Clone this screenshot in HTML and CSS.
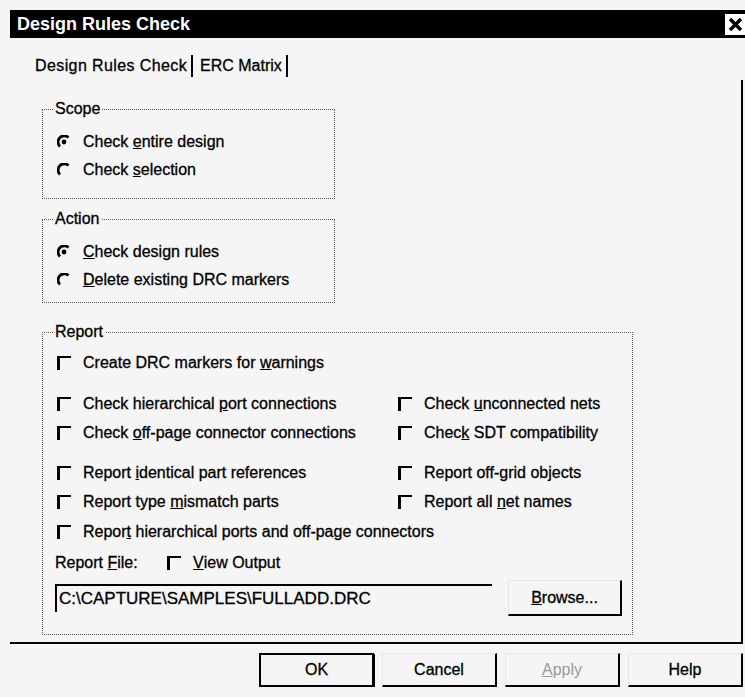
FILE: index.html
```html
<!DOCTYPE html>
<html>
	<head>
		<meta charset="utf-8"/>
		<title>Design Rules Check</title>
		<link rel="stylesheet" href="styles.css">
	</head>
	<body>
		<div class="dialog">
			<div class="titlebar">
				<span class="title">Design Rules Check</span>
				<span class="close">
					<svg width="15" height="15" viewBox="0 0 15 15"><path d="M2 2 L13 13 M13 2 L2 13" stroke="#000" stroke-width="3.4" fill="none"/></svg>
				</span>
			</div>

			<div class="tabs">
				<div class="tab tab_active">Design Rules Check</div>
				<div class="tab tab_erc">ERC Matrix</div>
			</div>

			<div class="panel">
				<fieldset class="group scope">
					<legend>Scope</legend>
					<div class="option">
						<svg class="radio" width="14" height="14" viewBox="0 0 14 14"><path d="M3 11.5 A5.5 5.5 0 0 1 11.5 2.5" stroke="#000" stroke-width="2.8" fill="none"/><circle cx="7" cy="7" r="2.4"/></svg>
						Check&nbsp;<u>e</u>ntire design
					</div>
					<div class="option">
						<svg class="radio" width="14" height="14" viewBox="0 0 14 14"><path d="M3 11.5 A5.5 5.5 0 0 1 11.5 2.5" stroke="#000" stroke-width="2.8" fill="none"/></svg>
						Check&nbsp;<u>s</u>election
					</div>
				</fieldset>

				<fieldset class="group action">
					<legend>Action</legend>
					<div class="option">
						<svg class="radio" width="14" height="14" viewBox="0 0 14 14"><path d="M3 11.5 A5.5 5.5 0 0 1 11.5 2.5" stroke="#000" stroke-width="2.8" fill="none"/><circle cx="7" cy="7" r="2.4"/></svg>
						<u>C</u>heck design rules
					</div>
					<div class="option">
						<svg class="radio" width="14" height="14" viewBox="0 0 14 14"><path d="M3 11.5 A5.5 5.5 0 0 1 11.5 2.5" stroke="#000" stroke-width="2.8" fill="none"/></svg>
						<u>D</u>elete existing DRC markers
					</div>
				</fieldset>

				<fieldset class="group report">
					<legend>Report</legend>
					<div class="option"><span class="check"></span>Create DRC markers for&nbsp;<u>w</u>arnings</div>

					<div class="columns">
						<div class="option"><span class="check"></span>Check hierarchical&nbsp;<u>p</u>ort connections</div>
						<div class="option"><span class="check"></span>Check&nbsp;<u>u</u>nconnected nets</div>
						<div class="option"><span class="check"></span>Check&nbsp;<u>o</u>ff-page connector connections</div>
						<div class="option"><span class="check"></span>Chec<u>k</u>&nbsp;SDT compatibility</div>
					</div>

					<div class="columns columns_second">
						<div class="option"><span class="check"></span>Report&nbsp;<u>i</u>dentical part references</div>
						<div class="option"><span class="check"></span>Report off-<u>g</u>rid objects</div>
						<div class="option"><span class="check"></span>Report type&nbsp;<u>m</u>ismatch parts</div>
						<div class="option"><span class="check"></span>Report all&nbsp;<u>n</u>et names</div>
					</div>

					<div class="option option_ports"><span class="check"></span>Repor<u>t</u>&nbsp;hierarchical ports and off-page connectors</div>

					<div class="option file_label">
						<span class="file_caption">Report&nbsp;<u>F</u>ile:</span>
						<span class="check"></span><u>V</u>iew Output
					</div>

					<div class="file_row">
						<div class="file_field">C:\CAPTURE\SAMPLES\FULLADD.DRC</div>
						<div class="button browse"><u>B</u>rowse...</div>
					</div>
				</fieldset>
			</div>

			<div class="buttons">
				<div class="button default">OK</div>
				<div class="button">Cancel</div>
				<div class="button disabled"><u>A</u>pply</div>
				<div class="button">Help</div>
			</div>
		</div>
	</body>
</html>
```

FILE: styles.css
```css
body {
	margin: 0;
	background: #f5f5f5;
	font-family: "Liberation Sans", Arial, sans-serif;
	font-size: 16px;
	color: #000;
	-webkit-text-stroke: 0.3px #000;
}
.dialog {
	margin: 10px 0 0 10px;
	width: 735px;
}
.titlebar {
	display: flex;
	align-items: center;
	height: 28px;
	background: #000;
	color: #fff;
	-webkit-text-stroke: 0;
}
.title {
	padding-left: 7px;
	font-weight: bold;
	font-size: 18px;
}
.close {
	margin-left: auto;
	width: 20px;
	height: 21px;
	background: #fff;
	display: flex;
	align-items: center;
	justify-content: center;
}
.tabs {
	display: flex;
	height: 42px;
	padding-top: 17px;
	box-sizing: border-box;
}
.tab {
	height: 22px;
	line-height: 22px;
	border-right: 2px solid #000;
	box-sizing: border-box;
}
.tab_active {
	width: 183px;
	padding-left: 25px;
	letter-spacing: 0.4px;
}
.tab_erc {
	width: 95px;
	padding-left: 7px;
}
.panel {
	width: 733px;
	box-sizing: border-box;
	border-right: 2px solid #000;
	border-bottom: 2px solid #000;
	padding: 20px 0 7px 32px;
}
.group {
	margin: 0;
	border: 1px dotted #555;
	box-sizing: border-box;
	min-width: 0;
}
.group legend {
	padding: 0 2px;
	line-height: 18px;
}
.scope {
	width: 293px;
	padding: 10px 0 14px 10px;
}
.action {
	width: 293px;
	margin-top: 11px;
	padding: 10px 0 8px 10px;
}
.report {
	width: 591px;
	margin-top: 20px;
	padding: 8px 0 18px 10px;
}
.option {
	display: flex;
	align-items: center;
	height: 28px;
	padding-left: 4px;
	white-space: nowrap;
}
.radio {
	flex: none;
	margin-right: 12px;
}
.check {
	flex: none;
	width: 11px;
	height: 12px;
	border-left: 3px solid #000;
	border-top: 2px solid #000;
	margin-right: 12px;
}
.columns {
	display: grid;
	grid-template-columns: 341px auto;
	grid-auto-rows: 29px;
	margin-top: 12px;
}
.columns .option {
	height: auto;
}
.columns_second {
	margin-top: 11px;
}
.option_ports {
	margin-top: 2px;
}
.file_label {
	margin-top: 3px;
	padding-left: 2px;
}
.file_caption {
	width: 112px;
}
.file_row {
	display: flex;
	align-items: center;
	height: 36px;
	margin-top: 3px;
	padding-left: 2px;
}
.file_field {
	width: 437px;
	height: 28px;
	box-sizing: border-box;
	border-top: 2px solid #000;
	border-left: 2px solid #000;
	font-size: 17px;
	line-height: 26px;
	padding-left: 2px;
}
.button {
	width: 115px;
	height: 34px;
	box-sizing: border-box;
	display: flex;
	align-items: center;
	justify-content: center;
	border-top: 1px solid #e6e6e6;
	border-left: 1px solid #e6e6e6;
	border-right: 2px solid #000;
	border-bottom: 2px solid #000;
}
.browse {
	width: 114px;
	height: 36px;
	margin-left: 16px;
}
.buttons {
	display: flex;
	justify-content: flex-end;
	gap: 8px;
	width: 733px;
	margin-top: 9px;
}
.default {
	border: 2px solid #000;
	box-shadow: 1px 1px 0 #000;
}
.disabled {
	color: #9a9a9a;
	-webkit-text-stroke: 0;
}
```
